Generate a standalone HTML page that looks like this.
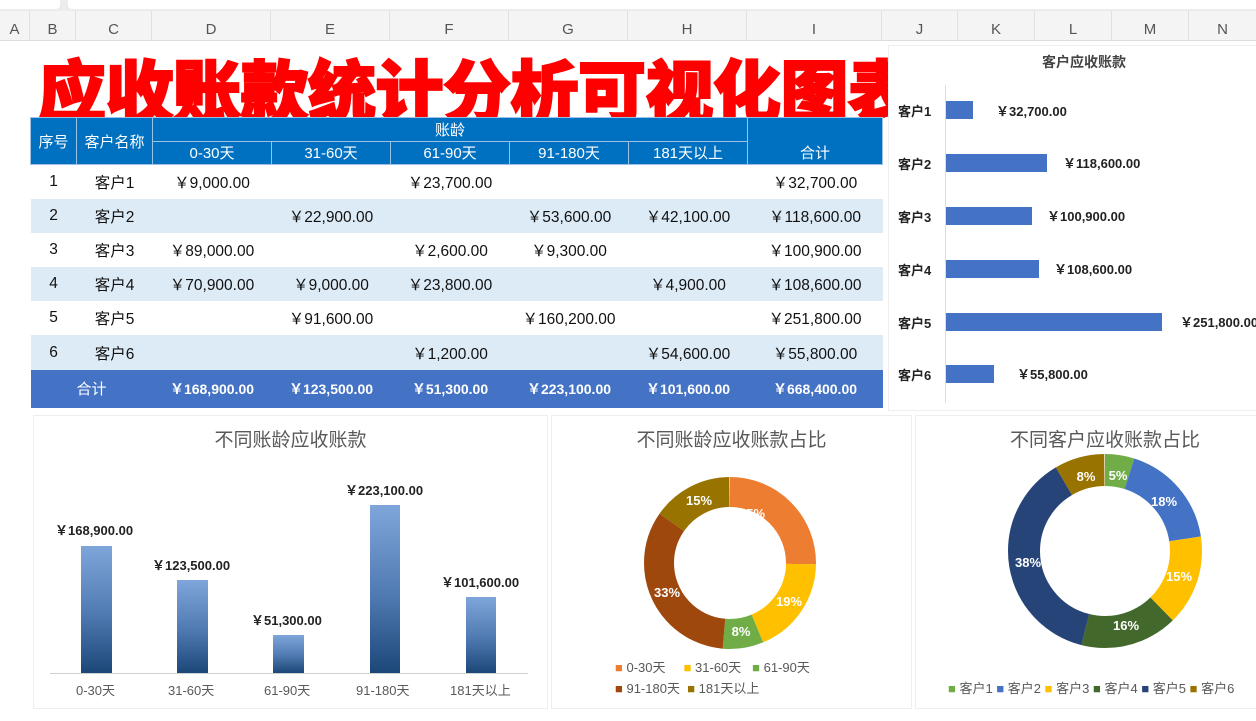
<!DOCTYPE html>
<html><head><meta charset="utf-8"><style>
*{margin:0;padding:0;box-sizing:border-box}
body{width:1256px;height:721px;overflow:hidden;background:#fff;font-family:"Liberation Sans","Noto Sans CJK SC",sans-serif;position:relative}
.a{position:absolute}
.col{position:absolute;top:11px;height:30px;line-height:38px;text-align:center;color:#555;font-size:15px;border-right:1px solid #e0e0e0}
table{position:absolute;left:30px;top:117px;border-collapse:collapse;font-size:15.5px;color:#111}
td{text-align:center;padding:0;white-space:nowrap}
.h td{background:#0070C0;color:#fff;border:1px solid #9cc3e5;height:23.5px;font-size:15px}
.r td{height:34.2px}
.alt td{background:#DDEBF7}
.t td{background:#4472C4;color:#fff;font-weight:bold;height:38px;font-size:14px}
.panel{position:absolute;background:#fff;border:1px solid #eee}
.lbl{position:absolute;font-size:13px;font-weight:bold;color:#222;white-space:nowrap}
</style></head><body>
<div class="a" style="left:0;top:0;width:1256px;height:11px;background:#ececec"></div>
<div class="a" style="left:0;top:0;width:60px;height:9px;background:#fff;border-radius:0 0 4px 0"></div>
<div class="a" style="left:68px;top:0;width:1188px;height:9px;background:#fff;border-radius:0 0 0 4px"></div>
<div class="a" style="left:0;top:11px;width:1256px;height:30px;background:#f4f4f4;border-bottom:1px solid #ddd"></div>
<div class="col" style="left:0;width:30px">A</div>
<div class="col" style="left:30px;width:46px">B</div>
<div class="col" style="left:76px;width:76px">C</div>
<div class="col" style="left:152px;width:119px">D</div>
<div class="col" style="left:271px;width:119px">E</div>
<div class="col" style="left:390px;width:119px">F</div>
<div class="col" style="left:509px;width:119px">G</div>
<div class="col" style="left:628px;width:119px">H</div>
<div class="col" style="left:747px;width:135px">I</div>
<div class="col" style="left:882px;width:76px">J</div>
<div class="col" style="left:958px;width:77px">K</div>
<div class="col" style="left:1035px;width:77px">L</div>
<div class="col" style="left:1112px;width:77px">M</div>
<div class="col" style="left:1189px;width:67px;border:none">N</div>

<div class="a" style="left:38px;top:38px;font-size:68px;font-weight:900;color:#FF0000;letter-spacing:-0.5px;white-space:nowrap;font-family:'Noto Sans CJK SC',sans-serif;-webkit-text-stroke:2px #FF0000">应收账款统计分析可视化图表</div>

<table>
<colgroup><col style="width:46px"><col style="width:76px"><col style="width:119px"><col style="width:119px"><col style="width:119px"><col style="width:119px"><col style="width:119px"><col style="width:135px"></colgroup>
<tr class="h"><td rowspan="2">序号</td><td rowspan="2">客户名称</td><td colspan="5">账龄</td><td style="border-bottom:none"></td></tr>
<tr class="h"><td>0-30天</td><td>31-60天</td><td>61-90天</td><td>91-180天</td><td>181天以上</td><td style="border-top:none">合计</td></tr>
<tr class="r"><td>1</td><td>客户1</td><td>￥9,000.00</td><td></td><td>￥23,700.00</td><td></td><td></td><td>￥32,700.00</td></tr>
<tr class="r alt"><td>2</td><td>客户2</td><td></td><td>￥22,900.00</td><td></td><td>￥53,600.00</td><td>￥42,100.00</td><td>￥118,600.00</td></tr>
<tr class="r"><td>3</td><td>客户3</td><td>￥89,000.00</td><td></td><td>￥2,600.00</td><td>￥9,300.00</td><td></td><td>￥100,900.00</td></tr>
<tr class="r alt"><td>4</td><td>客户4</td><td>￥70,900.00</td><td>￥9,000.00</td><td>￥23,800.00</td><td></td><td>￥4,900.00</td><td>￥108,600.00</td></tr>
<tr class="r"><td>5</td><td>客户5</td><td></td><td>￥91,600.00</td><td></td><td>￥160,200.00</td><td></td><td>￥251,800.00</td></tr>
<tr class="r alt"><td>6</td><td>客户6</td><td></td><td></td><td>￥1,200.00</td><td></td><td>￥54,600.00</td><td>￥55,800.00</td></tr>
<tr class="t"><td colspan="2" style="font-weight:normal;font-size:15px">合计</td><td>￥168,900.00</td><td>￥123,500.00</td><td>￥51,300.00</td><td>￥223,100.00</td><td>￥101,600.00</td><td>￥668,400.00</td></tr>
</table>

<!-- right bar chart -->
<div class="panel" style="left:888px;top:45px;width:370px;height:366px"></div>
<div class="a" style="left:888px;top:52px;width:392px;text-align:center;font-size:14px;font-weight:bold;color:#444">客户应收账款</div>
<div class="a" style="left:945px;top:85px;width:1px;height:318px;background:#ddd"></div>
<div class="lbl" style="left:898px;top:101px">客户1</div><div class="a" style="left:946px;top:101px;width:27px;height:18px;background:#4472C4"></div><div class="lbl" style="left:996px;top:101px">￥32,700.00</div>
<div class="lbl" style="left:898px;top:154px">客户2</div><div class="a" style="left:946px;top:154px;width:101px;height:18px;background:#4472C4"></div><div class="lbl" style="left:1063px;top:153px">￥118,600.00</div>
<div class="lbl" style="left:898px;top:207px">客户3</div><div class="a" style="left:946px;top:207px;width:86px;height:18px;background:#4472C4"></div><div class="lbl" style="left:1047px;top:206px">￥100,900.00</div>
<div class="lbl" style="left:898px;top:260px">客户4</div><div class="a" style="left:946px;top:260px;width:93px;height:18px;background:#4472C4"></div><div class="lbl" style="left:1054px;top:259px">￥108,600.00</div>
<div class="lbl" style="left:898px;top:313px">客户5</div><div class="a" style="left:946px;top:313px;width:216px;height:18px;background:#4472C4"></div><div class="lbl" style="left:1180px;top:312px">￥251,800.00</div>
<div class="lbl" style="left:898px;top:365px">客户6</div><div class="a" style="left:946px;top:365px;width:48px;height:18px;background:#4472C4"></div><div class="lbl" style="left:1017px;top:364px">￥55,800.00</div>

<!-- column chart -->
<div class="panel" style="left:33px;top:415px;width:515px;height:294px"></div>
<div class="a" style="left:33px;top:425px;width:515px;text-align:center;font-size:19px;color:#595959">不同账龄应收账款</div>
<div class="a" style="left:50px;top:673px;width:478px;height:1px;background:#d0d0d0"></div>
<svg class="a" style="left:0;top:0" width="1256" height="721">
<defs><linearGradient id="g" x1="0" y1="0" x2="0" y2="1"><stop offset="0" stop-color="#7FA6DA"/><stop offset="0.55" stop-color="#4E79B0"/><stop offset="1" stop-color="#1B4778"/></linearGradient></defs>
<rect x="81" y="546" width="31" height="127" fill="url(#g)"/>
<rect x="177" y="580" width="31" height="93" fill="url(#g)"/>
<rect x="273" y="635" width="31" height="38" fill="url(#g)"/>
<rect x="370" y="505" width="30" height="168" fill="url(#g)"/>
<rect x="466" y="597" width="30" height="76" fill="url(#g)"/>
<g transform="translate(730,563) rotate(-90)" fill="none" stroke-width="30">
<circle r="71" pathLength="100" stroke="#ED7D31" stroke-dasharray="25.27 100"/>
<circle r="71" pathLength="100" stroke="#FFC000" stroke-dasharray="18.48 100" stroke-dashoffset="-25.27"/>
<circle r="71" pathLength="100" stroke="#70AD47" stroke-dasharray="7.67 100" stroke-dashoffset="-43.75"/>
<circle r="71" pathLength="100" stroke="#9E480E" stroke-dasharray="33.38 100" stroke-dashoffset="-51.42"/>
<circle r="71" pathLength="100" stroke="#997300" stroke-dasharray="15.2 100" stroke-dashoffset="-84.8"/>
</g>
<g transform="translate(1105,551) rotate(-90)" fill="none" stroke-width="32">
<circle r="81" pathLength="100" stroke="#70AD47" stroke-dasharray="4.89 100"/>
<circle r="81" pathLength="100" stroke="#4472C4" stroke-dasharray="17.74 100" stroke-dashoffset="-4.89"/>
<circle r="81" pathLength="100" stroke="#FFC000" stroke-dasharray="15.1 100" stroke-dashoffset="-22.63"/>
<circle r="81" pathLength="100" stroke="#43682B" stroke-dasharray="16.25 100" stroke-dashoffset="-37.73"/>
<circle r="81" pathLength="100" stroke="#264478" stroke-dasharray="37.67 100" stroke-dashoffset="-53.98"/>
<circle r="81" pathLength="100" stroke="#997300" stroke-dasharray="8.35 100" stroke-dashoffset="-91.65"/>
</g>
<g font-family="Liberation Sans,sans-serif" font-weight="bold" font-size="13" fill="#fff" text-anchor="middle">
<text x="752" y="518">25%</text><text x="789" y="606">19%</text><text x="741" y="636">8%</text><text x="667" y="597">33%</text><text x="699" y="505">15%</text>
<text x="1118" y="480">5%</text><text x="1164" y="506">18%</text><text x="1179" y="581">15%</text><text x="1126" y="630">16%</text><text x="1028" y="567">38%</text><text x="1086" y="481">8%</text>
</g>
</svg>
<div class="lbl" style="left:55px;top:520px">￥168,900.00</div>
<div class="lbl" style="left:152px;top:555px">￥123,500.00</div>
<div class="lbl" style="left:251px;top:610px">￥51,300.00</div>
<div class="lbl" style="left:345px;top:480px">￥223,100.00</div>
<div class="lbl" style="left:441px;top:572px">￥101,600.00</div>
<div class="a" style="left:50px;top:680px;width:480px;font-size:13px;color:#595959">
<span class="a" style="left:26px">0-30天</span><span class="a" style="left:118px">31-60天</span><span class="a" style="left:214px">61-90天</span><span class="a" style="left:306px">91-180天</span><span class="a" style="left:400px">181天以上</span></div>

<!-- donut 1 -->
<div class="panel" style="left:551px;top:415px;width:361px;height:294px;background:transparent"></div>
<div class="a" style="left:551px;top:425px;width:361px;text-align:center;font-size:19px;color:#595959">不同账龄应收账款占比</div>
<div class="a" style="left:615px;top:657px;font-size:13px;color:#595959;white-space:nowrap;line-height:21px">
<span style="color:#ED7D31">■</span> 0-30天&nbsp;&nbsp;&nbsp;&nbsp;&nbsp;<span style="color:#FFC000">■</span> 31-60天&nbsp;&nbsp;&nbsp;<span style="color:#70AD47">■</span> 61-90天<br>
<span style="color:#9E480E">■</span> 91-180天&nbsp;&nbsp;<span style="color:#997300">■</span> 181天以上</div>

<!-- donut 2 -->
<div class="panel" style="left:915px;top:415px;width:345px;height:294px;background:transparent"></div>
<div class="a" style="left:915px;top:425px;width:380px;text-align:center;font-size:19px;color:#595959">不同客户应收账款占比</div>
<div class="a" style="left:948px;top:678px;font-size:13px;color:#595959;white-space:nowrap">
<span style="color:#70AD47">■</span> 客户1 <span style="color:#4472C4">■</span> 客户2 <span style="color:#FFC000">■</span> 客户3 <span style="color:#43682B">■</span> 客户4 <span style="color:#264478">■</span> 客户5 <span style="color:#997300">■</span> 客户6</div>
</body></html>
